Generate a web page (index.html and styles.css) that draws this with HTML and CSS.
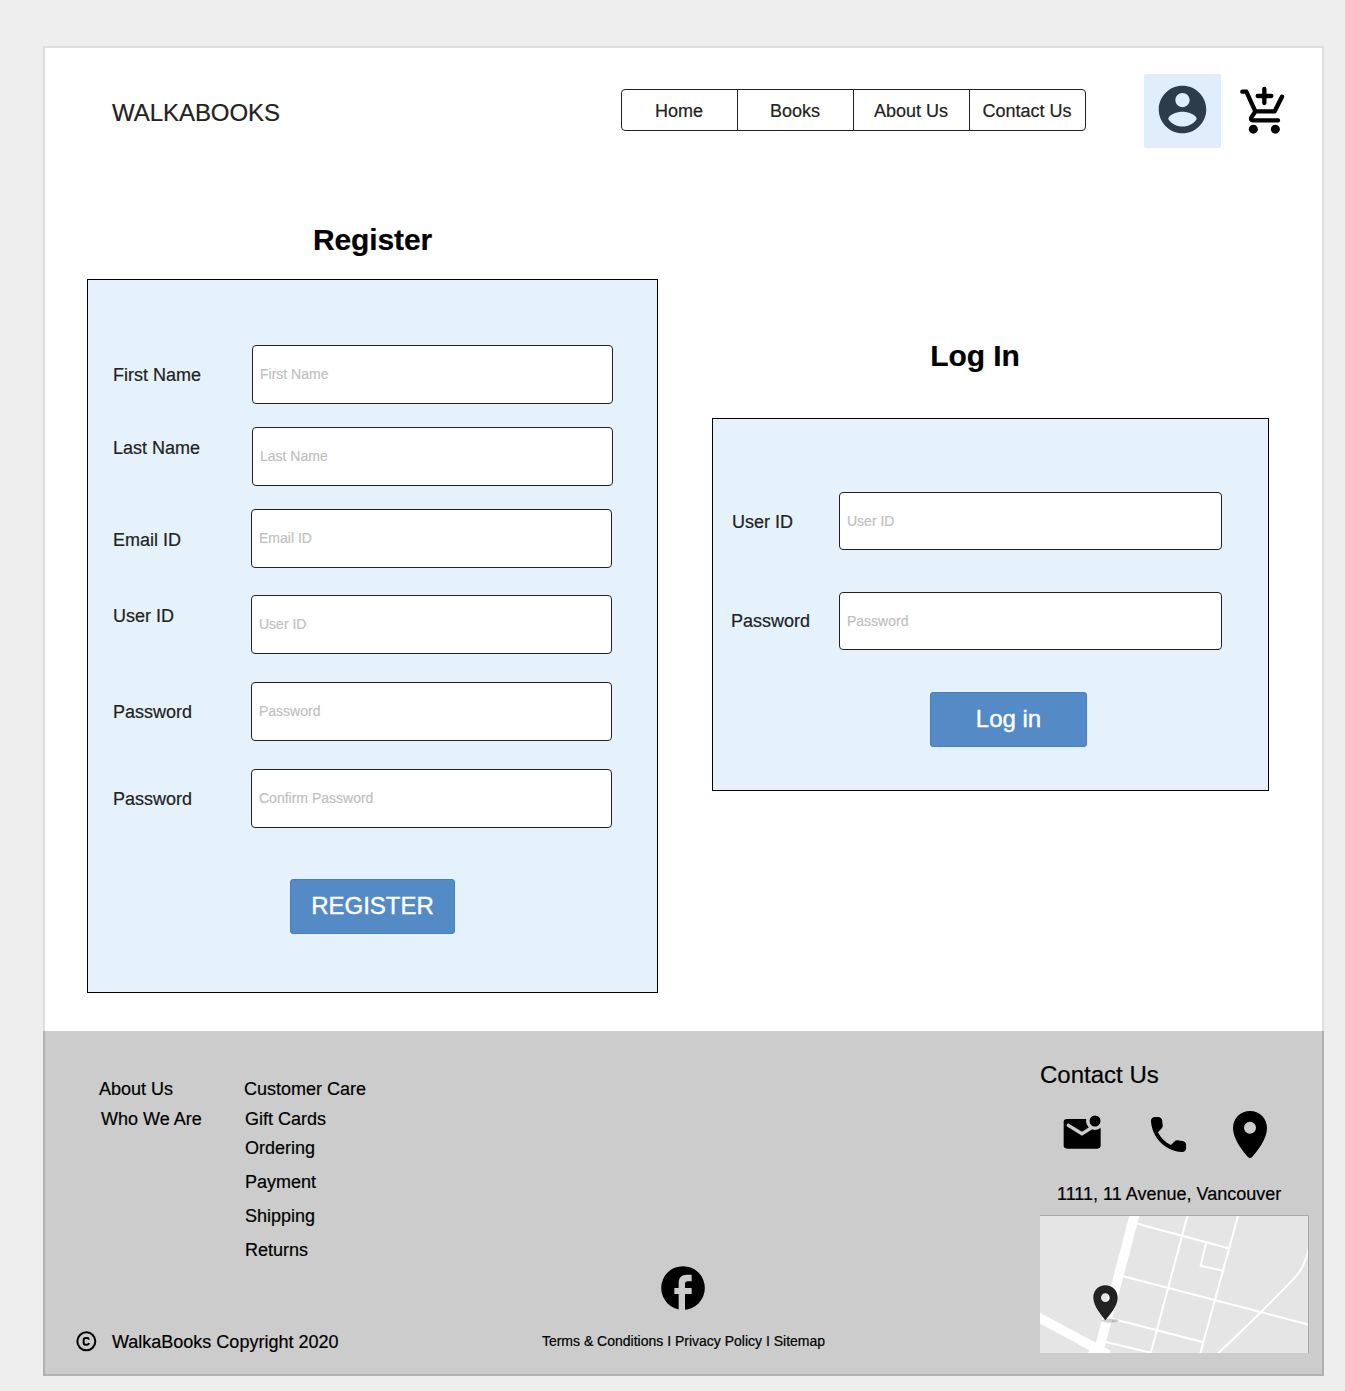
FILE: index.html
```html
<!DOCTYPE html>
<html lang="en">
<head>
<meta charset="utf-8">
<title>WalkaBooks</title>
<link rel="stylesheet" href="styles.css">
</head>
<body>
<div class="sheet">
  <header class="header">
    <div class="brand">WALKABOOKS</div>
    <nav class="nav">
      <a class="nav-item">Home</a>
      <a class="nav-item">Books</a>
      <a class="nav-item">About Us</a>
      <a class="nav-item">Contact Us</a>
    </nav>
    <a class="account">
      <svg class="account-icon" viewBox="0 0 24 24" fill="#2c3c4a"><path d="M12 2C6.48 2 2 6.48 2 12s4.480 10 10 10 10-4.480 10-10S17.520 2 12 2zm0 3c1.660 0 3 1.340 3 3s-1.340 3-3 3-3-1.340-3-3 1.340-3 3-3zm0 14.200c-2.500 0-4.710-1.280-6-3.220.030-1.990 4-3.080 6-3.080 1.990 0 5.970 1.090 6 3.080-1.290 1.940-3.500 3.220-6 3.220z"/></svg>
    </a>
    <svg class="cart-icon" viewBox="324 75 144 150" fill="none" stroke="#000" stroke-width="13" stroke-linecap="round" stroke-linejoin="round">
      <path d="M337 95H349L376 154H434L456 110M376 154L364 173Q361 181 369 181H444M403 87V129M383 108H424"/>
      <g fill="#000" stroke="none"><circle cx="370" cy="207.500" r="13.500"/><circle cx="436" cy="207.500" r="13.500"/></g>
    </svg>
  </header>

  <main class="main">
    <section class="register">
      <h1 class="title">Register</h1>
      <form class="panel panel-register">
        <div class="row"><label class="label">First Name</label><input class="field" placeholder="First Name"></div>
        <div class="row"><label class="label label-raised">Last Name</label><input class="field" placeholder="Last Name"></div>
        <div class="row row-inset"><label class="label label-lowered">Email ID</label><input class="field" placeholder="Email ID"></div>
        <div class="row row-inset row-wide"><label class="label label-raised">User ID</label><input class="field" placeholder="User ID"></div>
        <div class="row row-inset row-wider"><label class="label">Password</label><input class="field" placeholder="Password"></div>
        <div class="row row-inset row-wider"><label class="label">Password</label><input class="field" placeholder="Confirm Password"></div>
        <button class="button button-register" type="button">REGISTER</button>
      </form>
    </section>
    <section class="login">
      <h1 class="title title-login">Log In</h1>
      <form class="panel panel-login">
        <div class="row"><label class="label label-lowered">User ID</label><input class="field" placeholder="User ID"></div>
        <div class="row"><label class="label label-password">Password</label><input class="field" placeholder="Password"></div>
        <button class="button button-login" type="button">Log in</button>
      </form>
    </section>
  </main>

  <footer class="footer">
    <div class="footer-left">
      <div class="link-columns">
        <div class="links links-about"><a>About Us</a><a class="sub">Who We Are</a></div>
        <div class="links"><a>Customer Care</a><a class="sub">Gift Cards</a><a class="sub tight">Ordering</a><a class="sub loose">Payment</a><a class="sub loose">Shipping</a><a class="sub loose">Returns</a></div>
      </div>
      <div class="copyright">
        <svg class="copyright-icon" viewBox="50 62 63 63" fill="none" stroke="#000"><circle cx="81" cy="93" r="27" stroke-width="6"/><path d="M89 88Q88 83 83 83H79Q73 83 73 89V97Q73 103 79 103H83Q88 103 89 98" stroke-width="6"/></svg>
        <span>WalkaBooks Copyright 2020</span>
      </div>
    </div>
    <div class="footer-center">
      <svg class="facebook-icon" viewBox="63 48 132 132"><circle cx="129" cy="114" r="65.500"/><path fill="#ccc" d="M116 181V132H103V114H116V98C116 83 125 74 140 74H155V94H143Q135 94 135 102V114H155V132H135V181Z"/></svg>
      <div class="legal">Terms &amp; Conditions I Privacy Policy I Sitemap</div>
    </div>
    <div class="footer-right">
      <h2 class="contact-title">Contact Us</h2>
      <div class="contact-icons">
        <svg class="mail-icon" viewBox="96 189 120 111"><rect x="101" y="207" width="111" height="89" rx="10"/><path d="M115 226L156 251L196 226" fill="none" stroke="#ccc" stroke-width="10" stroke-linecap="round"/><circle cx="195" cy="213" r="27" fill="#ccc"/><circle cx="195" cy="213" r="16.500"/></svg>
        <svg class="phone-icon" viewBox="0 0 24 24"><path d="M19.230 15.260l-2.540-.290c-.610-.070-1.210.140-1.640.570l-1.840 1.840c-2.830-1.440-5.150-3.750-6.590-6.590l1.850-1.850c.430-.430.640-1.030.570-1.640l-.290-2.520c-.120-1.010-.970-1.770-1.990-1.770H5.030c-1.130 0-2.070.940-2 2.070.530 8.540 7.360 15.360 15.890 15.890 1.130.070 2.070-.870 2.070-2v-1.730c.010-1.010-.750-1.860-1.760-1.980z"/></svg>
        <svg class="pin-icon" viewBox="606 180 108 147"><path fill-rule="evenodd" d="M660 183C632 183 609 205 609 234C609 267 637 302 653 320Q660 328 667 320C683 302 711 267 711 234C711 205 688 183 660 183ZM660 215A18 18 0 1 1 660 251A18 18 0 1 1 660 215Z"/></svg>
      </div>
      <div class="address">1111, 11 Avenue, Vancouver</div>
      <svg class="map" viewBox="30 30 807 414">
        <path fill="#e5e5e5" d="M30 30H837V444H30Z"/>
        <g fill="none" stroke="#fff">
          <path stroke-width="29" d="M316 22L203 450"/>
          <path stroke-width="29" d="M20 334L235 450"/>
          <path fill="#fff" stroke="none" d="M196 418L172 444H240L220 426Z"/>
          <path stroke-width="6" d="M322 56L595 130M474 26L361 448M626 26L510 448M528 115L512 182L578 197M280 214L837 359M235 338L518 411M225 410L366 444M837 130C825 175 815 196 795 217C735 280 640 374 562 447"/>
        </g>
        <path d="M30 31.500H835.500V444" fill="none" stroke="#a8a8a8" stroke-width="3"/>
        <ellipse cx="240" cy="347" rx="26" ry="6" fill="#000" opacity=".18"/>
        <path fill="#222" fill-rule="evenodd" d="M226 241C205 241 190 257 190 278C190 303 213 328 226 346C240 328 263 303 263 278C263 257 247 241 226 241ZM226 265A13 13 0 1 1 226 291A13 13 0 1 1 226 265Z"/>
      </svg>
    </div>
  </footer>
</div>
</body>
</html>
```
FILE: styles.css
```css
* { box-sizing: border-box; }

body {
  margin: 0;
  padding: 46px 21px 15px 43px;
  background: #eee;
  color: #222;
  font-family: "Liberation Sans", Arial, sans-serif;
  font-size: 18px;
  line-height: 20px;
  -webkit-text-stroke: .2px;
}

svg { display: block; flex: none; }

.sheet {
  position: relative;
  width: 1281px;
  height: 1330px;
  background: #fff;
}

/* translucent frame drawn over the page and its footer */
.sheet::after {
  content: "";
  position: absolute;
  inset: 0;
  border: 2px solid rgba(0, 0, 0, .13);
  pointer-events: none;
}

.header {
  display: flex;
  align-items: center;
  height: 102px;
  padding: 28px 0 0 69px;
}

.brand {
  width: 509px;
  padding-top: 3px;
  font-size: 24px;
  line-height: 28px;
  letter-spacing: -.05px;
}

.nav {
  display: flex;
  width: 465px;
  height: 42px;
  margin: 0 58px 2px 0;
  border: 1px solid #222;
  border-radius: 4px;
}

.nav-item {
  flex: 1;
  padding: 11px 1px 0 0;
  text-align: center;
  white-space: nowrap;
}

.nav-item + .nav-item { border-left: 1px solid #222; }

.account {
  display: flex;
  justify-content: center;
  width: 77px;
  height: 74px;
  padding-top: 7px;
  border-radius: 2px;
  background: #e0eefc;
}

.account-icon { width: 57px; height: 57px; }

.cart-icon { width: 48px; height: 50px; margin: 0 0 2px 17px; }

.main {
  display: flex;
  gap: 54px;
  height: 883px;
  padding: 74px 0 0 44px;
}

.register { width: 571px; }

.login { width: 557px; padding-top: 116px; }

.title {
  margin: 0 0 21px;
  color: #000;
  font-size: 30px;
  line-height: 36px;
  text-align: center;
  letter-spacing: -.1px;
}

.title-login { margin-bottom: 44px; padding-right: 31px; }

.panel {
  border: 1px solid #000;
  background: #e5f2fc;
}

.panel-register { height: 714px; padding: 65px 44px 0 25px; }

.panel-login { height: 373px; padding: 73px 46px 0 19px; }

.row {
  display: flex;
  align-items: center;
  justify-content: space-between;
}

.row + .row { margin-top: 23px; }
.row-inset { padding-right: 1px; }
.row + .row-wide { margin-top: 27px; }
.row + .row-wider { margin-top: 28px; }
.panel-login .row + .row { margin-top: 42px; }

.label-raised { padding-bottom: 17px; }
.label-lowered { padding-top: 2px; }
.label-password { margin-left: -1px; }

.field {
  width: 361px;
  height: 59px;
  padding: 0 7px 1px;
  border: 1px solid #222;
  border-radius: 4px;
  background: #fff;
  font: 14px "Liberation Sans", Arial, sans-serif;
}

.field::placeholder { color: #bfbfbf; opacity: 1; -webkit-text-stroke: .2px; }

.panel-login .field { width: 383px; height: 58px; }

.button {
  display: block;
  height: 55px;
  padding: 0 0 2px;
  border: 1px solid #4680c0;
  border-radius: 3px;
  background: #548ac6;
  color: #fff;
  font: 24px "Liberation Sans", Arial, sans-serif;
  -webkit-text-stroke: .4px;
}

.button-register { width: 165px; margin: 51px 0 0 177px; }

.button-login { width: 157px; margin: 42px 0 0 198px; }

.footer {
  display: flex;
  height: 345px;
  background: #ccc;
  color: #000;
}

.footer-left {
  display: flex;
  flex-direction: column;
  justify-content: space-between;
  width: 499px;
  padding: 48px 0 24px 33px;
}

.link-columns { display: flex; padding-left: 23px; }

.links { display: flex; flex-direction: column; }
.links-about { width: 145px; }
.sub { margin: 10px 0 0 1px; }
.links-about .sub { margin-left: 2px; }
.tight { margin-top: 9px; }
.loose { margin-top: 14px; }

.copyright { display: flex; align-items: center; gap: 15px; }

.copyright-icon { width: 21px; height: 21px; }

.footer-center {
  display: flex;
  flex-direction: column;
  align-items: center;
  width: 283px;
  padding-top: 235px;
}

.facebook-icon { width: 44px; height: 44px; margin-right: 1px; }

.legal { margin-top: 21px; font-size: 14px; white-space: nowrap; }

.footer-right { margin-left: 215px; padding-top: 30px; }

.contact-title {
  margin: 0;
  font-size: 24px;
  font-weight: 400;
  line-height: 28px;
}

.contact-icons {
  display: flex;
  height: 49px;
  margin-top: 21px;
  padding-left: 22px;
}

.mail-icon { width: 40px; height: 37px; margin-top: 3px; }
.phone-icon { width: 47px; height: 47px; margin: 1px 40px 0 43px; }
.pin-icon { width: 36px; height: 49px; }

.address { margin: 25px 0 11px 17px; white-space: nowrap; }

.map { width: 269px; height: 138px; }
```
